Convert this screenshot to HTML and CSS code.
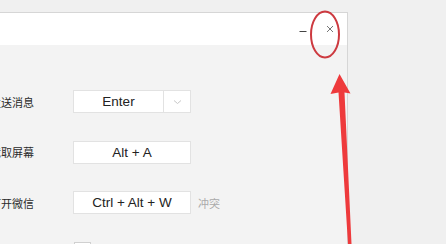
FILE: index.html
```html
<!DOCTYPE html>
<html lang="zh-CN">
<head>
  <meta charset="UTF-8">
  <title>快捷键设置</title>
  <link rel="stylesheet" href="styles.css">
</head>
<body>

  <div class="window">
    <div class="titlebar">
      <span class="win-btn min-btn">
        <svg width="8" height="8" viewBox="0 0 8 8"><line x1="0.5" y1="6.5" x2="7.5" y2="6.5" stroke="#444" stroke-width="1"/></svg>
      </span>
      <span class="win-btn close-btn">
        <svg width="8" height="8" viewBox="0 0 8 8"><path d="M1 1 L7 7 M7 1 L1 7" stroke="#777" stroke-width="1"/></svg>
      </span>
    </div>

    <div class="settings">
      <div class="row">
        <span class="label">发送消息</span>
        <div class="key-box select">
          <span class="key-text">Enter</span>
          <span class="arrow-part">
            <svg width="9" height="6" viewBox="0 0 9 6"><path d="M1 1.5 L4.5 4.5 L8 1.5" fill="none" stroke="#c8c8c8" stroke-width="1"/></svg>
          </span>
        </div>
      </div>
      <div class="row">
        <span class="label">截取屏幕</span>
        <div class="key-box"><span class="key-text">Alt + A</span></div>
      </div>
      <div class="row">
        <span class="label">打开微信</span>
        <div class="key-box"><span class="key-text">Ctrl + Alt + W</span></div>
        <span class="conflict">冲突</span>
      </div>
      <div class="row check-row">
        <span class="checkbox"></span>
      </div>
    </div>
  </div>

  <!-- annotation marks drawn over the screenshot -->
  <svg class="marks" width="446" height="244" viewBox="0 0 446 244">
    <ellipse cx="325" cy="34.5" rx="14" ry="23" fill="none" stroke="#cd3a40" stroke-width="2"/>
    <polygon points="339.5,74 330.5,94 338.5,92.5 348,244 351.5,244 344.5,92.5 350.5,93.5" fill="#ee3a3c"/>
  </svg>

</body>
</html>
```

FILE: styles.css
```css
body {
  margin: 0;
  width: 446px;
  height: 244px;
  overflow: hidden;
  background-color: #f0f0f0;
  font-family: "Noto Sans CJK SC", "Noto Sans", sans-serif;
  color: #333;
}

.window {
  margin-top: 12px;
  margin-left: -60px;
  width: 406px;
  height: 231px;
  overflow: hidden;
  background-color: #f3f3f3;
  border: 1px solid #d6d6d6;
  border-bottom: none;
}

.titlebar {
  height: 32px;
  background-color: #fff;
  display: flex;
  justify-content: flex-end;
  align-items: center;
}

.win-btn {
  display: flex;
  width: 8px;
  height: 8px;
}

.min-btn {
  margin-right: 19px;
}

.close-btn {
  margin-right: 13px;
}

.settings {
  padding-top: 45px;
  display: flex;
  flex-direction: column;
  gap: 27.5px;
}

.row {
  display: flex;
  align-items: center;
  height: 23px;
}

.label {
  width: 93px;
  margin-right: 39px;
  text-align: right;
  font-size: 11px;
  white-space: nowrap;
  color: #2a2a2a;
}

.key-box {
  width: 116px;
  height: 21px;
  background-color: #fff;
  border: 1px solid #e2e2e2;
  display: flex;
  align-items: center;
  justify-content: center;
  font-family: "Liberation Sans", Arial, sans-serif;
  font-size: 13.5px;
  color: #222;
}

.select {
  justify-content: flex-start;
}

.select .key-text {
  flex: 1;
  text-align: center;
}

.arrow-part {
  width: 26px;
  height: 100%;
  border-left: 1px solid #e2e2e2;
  display: flex;
  align-items: center;
  justify-content: center;
}

.conflict {
  margin-left: 7px;
  font-size: 11px;
  color: #aaa;
}

.check-row {
  align-items: flex-start;
  padding-left: 133px;
}

.checkbox {
  width: 15px;
  height: 15px;
  background-color: #fff;
  border: 1px solid #d0d0d0;
}

.marks {
  position: absolute;
  left: 0;
  top: 0;
}
```
